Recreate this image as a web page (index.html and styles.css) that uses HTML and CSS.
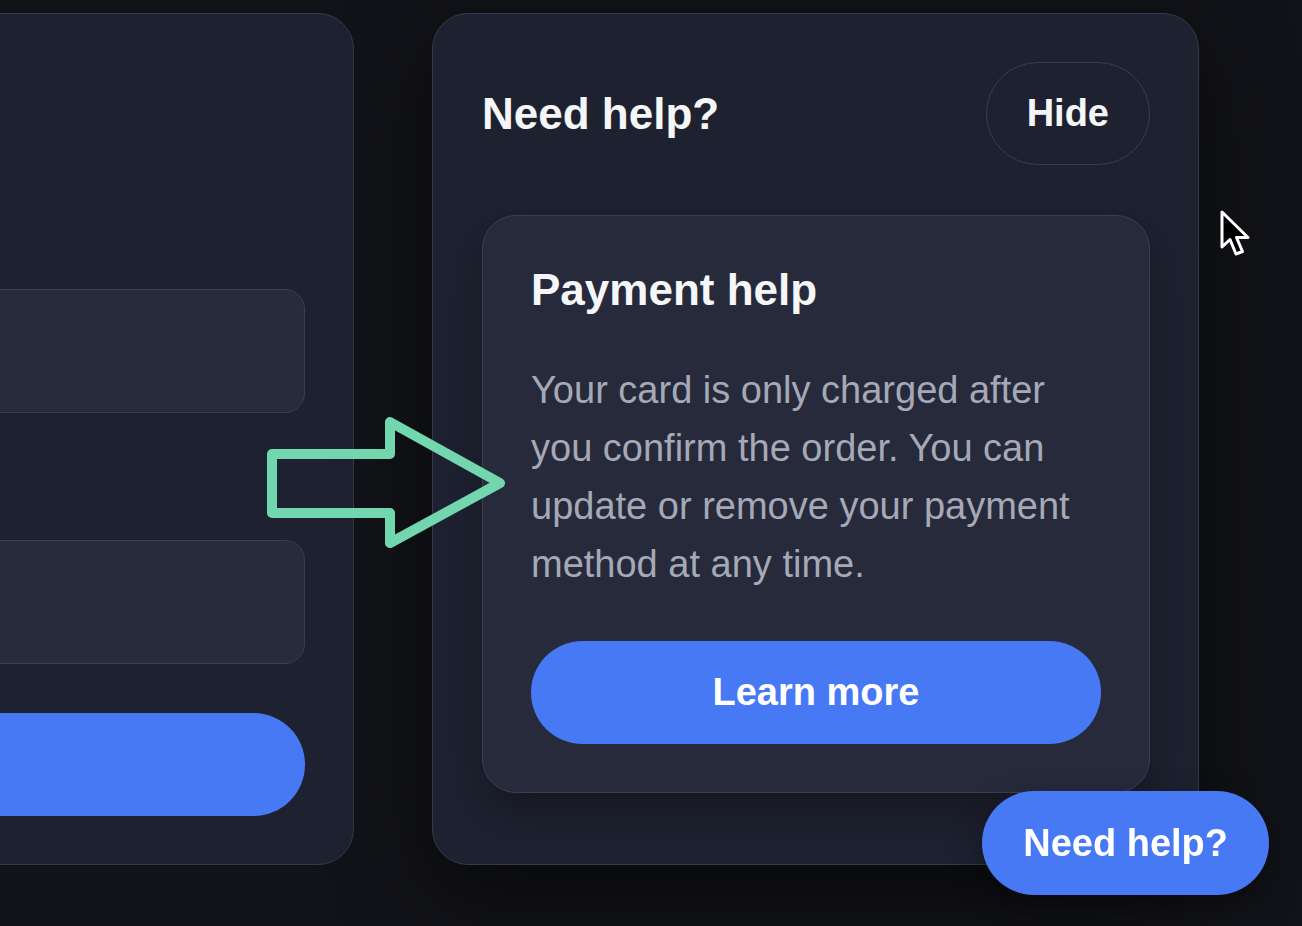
FILE: index.html
```html
<!DOCTYPE html>
<html>
<head>
    <link rel="stylesheet" href="styles.css">
</head>
<body>
    <div class="layout">
        <div class="panel checkout">
            <div class="panel-header"></div>
            <div class="field field-first">
                <div class="field-label"></div>
                <div class="field-box"></div>
            </div>
            <div class="field field-second">
                <div class="field-label"></div>
                <div class="field-box"></div>
            </div>
            <div class="pay-button"></div>
        </div>

        <div class="panel help-panel">
            <div class="panel-header">
                <h2>Need help?</h2>
                <button class="ghost-button" type="button">Hide</button>
            </div>
            <div class="help-card">
                <h3>Payment help</h3>
                <p>Your card is only charged after you confirm the order. You can update or remove your payment method at any time.</p>
                <button class="primary-button" type="button">Learn more</button>
            </div>
        </div>
    </div>

    <!-- annotation arrow -->
    <svg class="pointer-arrow" width="260" height="150" viewBox="0 0 260 150">
        <polygon points="12,39 130,39 130,7 240,68 130,128 130,98 12,98" fill="none" stroke="#72d6ae" stroke-width="10" stroke-linejoin="round"/>
    </svg>

    <!-- mouse cursor -->
    <svg class="mouse-cursor" width="40" height="56" viewBox="0 0 40 56">
        <path d="M3,3 L3,38 L11,30.5 L17,45 L23.5,42.5 L17.5,28.5 L29,28.5 Z" fill="#000" stroke="#fff" stroke-width="3" stroke-linejoin="round"/>
    </svg>

    <button class="help-fab" type="button">Need help?</button>
</body>
</html>
```

FILE: styles.css
```css
body {
    font-family: "Liberation Sans", Arial, sans-serif;
    background-color: #121318;
    margin: 0;
    padding: 0;
    height: 926px;
    overflow: hidden;
    color: #f4f5f8;
}

.layout {
    display: grid;
    grid-template-columns: 767px 767px;
    gap: 78px;
    margin-left: -413px;
    padding-top: 13px;
}

.panel {
    background-color: #1e2130;
    border: 1px solid #353a49;
    border-radius: 36px;
    padding: 48px 48px 48px 49px;
    height: 852px;
    box-sizing: border-box;
}

.help-panel {
    box-shadow: 0 30px 90px rgba(0, 0, 0, 0.55);
}

.panel-header {
    display: flex;
    align-items: center;
    justify-content: space-between;
    height: 103px;
}

.panel-header h2 {
    margin: 0;
    font-size: 44px;
    font-weight: bold;
    color: #f5f6f8;
}

.ghost-button {
    font-family: inherit;
    font-size: 38px;
    font-weight: bold;
    color: #f5f6f8;
    background: transparent;
    border: 1px solid #3a3f4e;
    border-radius: 52px;
    height: 103px;
    padding: 0 40px;
    cursor: pointer;
}

.field-label {
    height: 44px;
    margin-bottom: 30px;
}

.field-first {
    margin-top: 50px;
}

.field-second {
    margin-top: 53px;
}

.field-box {
    height: 124px;
    background-color: #282b3b;
    border: 1px solid #3a3e4d;
    border-radius: 20px;
    box-sizing: border-box;
}

.pay-button {
    margin-top: 49px;
    height: 103px;
    border-radius: 52px;
    background-color: #4779f5;
}

.help-card {
    margin-top: 50px;
    background-color: #272a3b;
    border: 1px solid #3b3f4f;
    border-radius: 34px;
    padding: 48px;
    box-shadow: 0 20px 45px rgba(0, 0, 0, 0.28);
}

.help-card h3 {
    margin: 0;
    font-size: 44px;
    font-weight: bold;
    line-height: 51px;
    color: #f5f6f8;
}

.help-card p {
    margin: 46px 0 0;
    font-size: 38px;
    line-height: 58px;
    color: #a5a9b6;
}

.primary-button {
    display: block;
    width: 100%;
    margin-top: 48px;
    height: 103px;
    border: none;
    border-radius: 52px;
    background-color: #4779f5;
    color: #fff;
    font-family: inherit;
    font-size: 38px;
    font-weight: bold;
    cursor: pointer;
}

.help-fab {
    position: fixed;
    right: 33px;
    bottom: 31px;
    height: 104px;
    padding: 0 41px;
    border: none;
    border-radius: 52px;
    background-color: #4779f5;
    color: #fff;
    font-family: inherit;
    font-size: 38px;
    font-weight: bold;
    box-shadow: 0 10px 30px rgba(0, 0, 0, 0.35);
}

.pointer-arrow {
    position: absolute;
    left: 260px;
    top: 415px;
}

.mouse-cursor {
    position: absolute;
    left: 1219px;
    top: 209px;
}
```
